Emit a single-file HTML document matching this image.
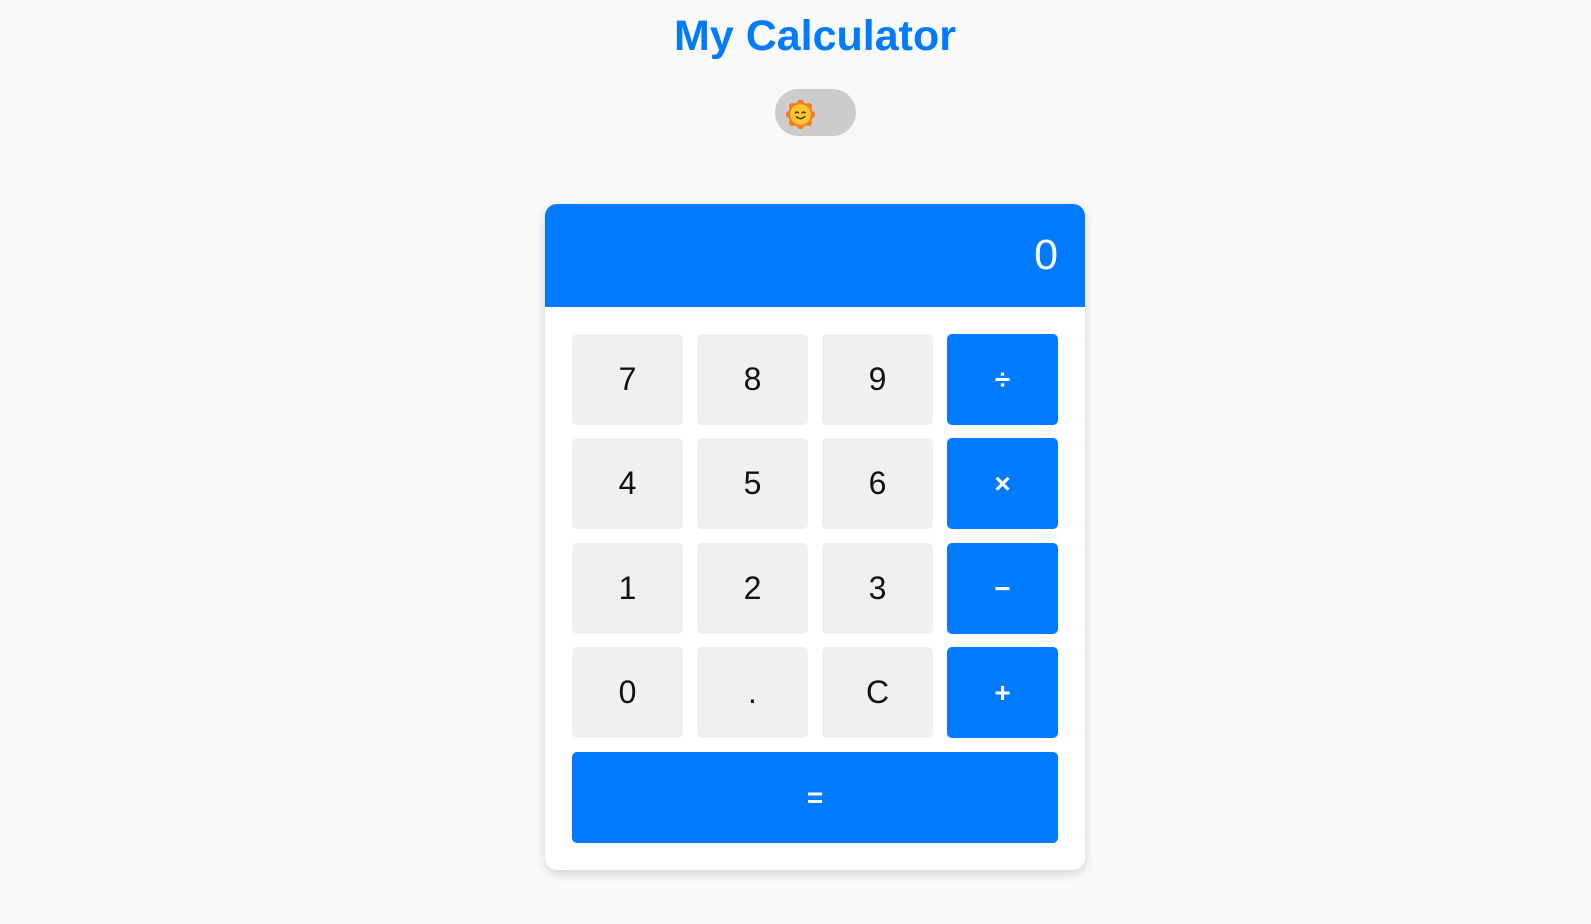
<!DOCTYPE html>
<html><head><meta charset="utf-8"><style>
html,body{margin:0;padding:0;background:#f9f9f9;width:1591px;height:924px;overflow:hidden;font-family:"Liberation Sans",Arial,sans-serif}
h1{position:absolute;left:615px;width:400px;top:11px;margin:0;text-align:center;color:#007bff;font-size:43px;font-weight:bold;line-height:50px}
.tog{position:absolute;left:775px;top:89px;width:81px;height:47px;border-radius:24px;background:#ccc}
.tog svg{position:absolute;left:11px;top:11px}
.card{position:absolute;left:545px;top:204px;width:540px;height:666px;background:#fff;border-radius:12px;box-shadow:0 4px 10px rgba(0,0,0,.15);overflow:hidden}
.disp{height:103px;background:#007bff;color:#fff;font-size:43px;text-align:right;box-sizing:border-box;padding-right:27px;line-height:103px}
.b{position:absolute;width:111px;height:91px;border-radius:5px;background:#f0f0f0;color:#111;font-size:32px;text-align:center;line-height:91px}
.o{background:#007bff;color:#fff;font-size:28px;font-weight:bold}
</style></head><body>
<h1>My Calculator</h1>
<div class="tog"><svg width="29" height="29" viewBox="0 0 28 28">
<g fill="#f57c1f"><circle cx="14" cy="14" r="12"/>
<circle cx="14" cy="2.5" r="3"/><circle cx="14" cy="25.5" r="3"/><circle cx="2.5" cy="14" r="3"/><circle cx="25.5" cy="14" r="3"/>
<circle cx="5.9" cy="5.9" r="3"/><circle cx="22.1" cy="5.9" r="3"/><circle cx="5.9" cy="22.1" r="3"/><circle cx="22.1" cy="22.1" r="3"/></g>
<circle cx="14" cy="14" r="10" fill="#fcc72f"/>
<path d="M9 12.5q1.5-2 3 0M15.5 12.5q1.5-2 3 0M10 16q4 4 8 0" stroke="#3a2a1a" stroke-width="1.3" fill="none" stroke-linecap="round"/>
</svg></div>
<div class="card"><div class="disp">0</div>
<div class="b" style="left:27px;top:130px">7</div><div class="b" style="left:152px;top:130px">8</div><div class="b" style="left:277px;top:130px">9</div><div class="b o" style="left:402px;top:130px">÷</div>
<div class="b" style="left:27px;top:234px">4</div><div class="b" style="left:152px;top:234px">5</div><div class="b" style="left:277px;top:234px">6</div><div class="b o" style="left:402px;top:234px">×</div>
<div class="b" style="left:27px;top:339px">1</div><div class="b" style="left:152px;top:339px">2</div><div class="b" style="left:277px;top:339px">3</div><div class="b o" style="left:402px;top:339px">−</div>
<div class="b" style="left:27px;top:443px">0</div><div class="b" style="left:152px;top:443px">.</div><div class="b" style="left:277px;top:443px">C</div><div class="b o" style="left:402px;top:443px">+</div>
<div class="b o" style="left:27px;top:548px;width:486px">=</div>
</div>
</body></html>
